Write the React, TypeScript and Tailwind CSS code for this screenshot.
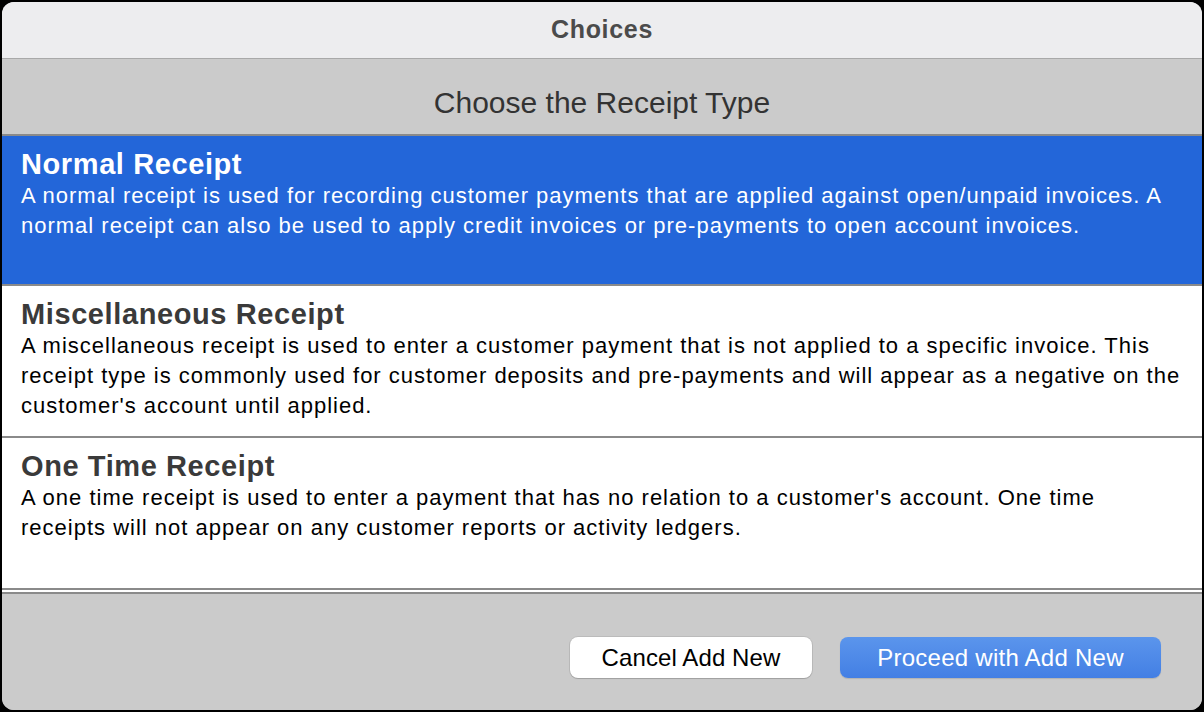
import React from "react";

const rows = [
  {
    title: "Normal Receipt",
    desc: "A normal receipt is used for recording customer payments that are applied against open/unpaid invoices. A normal receipt can also be used to apply credit invoices or pre-payments to open account invoices.",
    selected: true,
  },
  {
    title: "Miscellaneous Receipt",
    desc: "A miscellaneous receipt is used to enter a customer payment that is not applied to a specific invoice. This receipt type is commonly used for customer deposits and pre-payments and will appear as a negative on the customer's account until applied.",
    selected: false,
  },
  {
    title: "One Time Receipt",
    desc: "A one time receipt is used to enter a payment that has no relation to a customer's account. One time receipts will not appear on any customer reports or activity ledgers.",
    selected: false,
  },
];

export default function App() {
  return (
    <div
      className="w-[1204px] h-[712px] bg-black p-[2px]"
      style={{ fontFamily: '"Liberation Sans", Arial, Helvetica, sans-serif' }}
    >
      <div className="w-full h-full rounded-[12px] overflow-hidden flex flex-col bg-[#cbcbcb]">
        <div className="h-[57px] shrink-0 bg-[#ededef] border-b border-[#a9a9a9] flex items-center justify-center">
          <span className="text-[25px] font-bold text-[#4b4b4b] leading-none tracking-[0.7px] pb-[2px]">Choices</span>
        </div>
        <div className="h-[77px] shrink-0 bg-[#cbcbcb] flex items-center justify-center border-b-2 border-[#8a8a8a]">
          <span className="text-[30px] text-[#333333] leading-none pt-[13px]">Choose the Receipt Type</span>
        </div>
        <div className="shrink-0 bg-white">
          {rows.map((r, i) => (
            <div
              key={i}
              className={`${i === 0 ? "h-[150px]" : "h-[152px]"} border-b-2 border-[#8a8a8a] px-[19px] pt-[11px] ${
                r.selected ? "bg-[#2366d9] text-white" : "bg-white text-black"
              }`}
            >
              <div
                className={`text-[29px] font-bold leading-[34px] tracking-[0.6px] ${
                  r.selected ? "text-white" : "text-[#3a3a3a]"
                }`}
              >
                {r.title}
              </div>
              <div className="text-[22px] leading-[30px] tracking-[1px]">{r.desc}</div>
            </div>
          ))}
          <div className="h-[2px] bg-white" />
        </div>
        <div className="flex-1 border-t-2 border-[#8a8a8a] bg-[#cbcbcb] flex justify-end items-start pt-[43px] pr-[41px] gap-[28px]">
          <button className="w-[242px] h-[41px] rounded-[8px] bg-white text-black text-[24px] leading-none tracking-[0.1px] shadow-[0_0_0_1px_rgba(0,0,0,0.08),0_1px_1px_rgba(0,0,0,0.15)]">
            Cancel Add New
          </button>
          <button className="w-[321px] h-[41px] rounded-[8px] bg-gradient-to-b from-[#5b95ec] to-[#437fe4] text-white text-[24px] leading-none tracking-[0.25px] shadow-[0_1px_1px_rgba(0,0,0,0.12)]">
            Proceed with Add New
          </button>
        </div>
      </div>
    </div>
  );
}
